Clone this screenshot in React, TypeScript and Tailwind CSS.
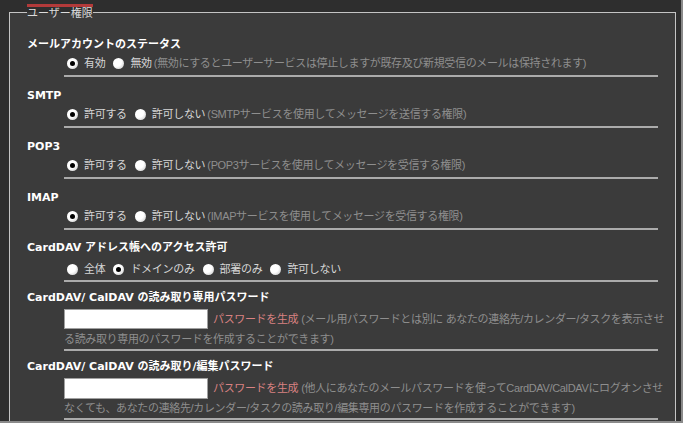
import React from "react";

const body = "font-['Liberation_Sans','Noto_Sans_CJK_JP',sans-serif]";
const head = "font-['DejaVu_Sans','Noto_Sans_CJK_JP',sans-serif]";

function Radio({ on }: { on?: boolean }) {
  return (
    <span className="inline-flex h-[11px] w-[11px] shrink-0 items-center justify-center rounded-full bg-[radial-gradient(circle_at_35%_35%,#ffffff_45%,#bdbdbd_100%)]">
      {on && <span className="h-[5px] w-[5px] rounded-full bg-black" />}
    </span>
  );
}

function Choices({ items, sel, note }: { items: string[]; sel: number; note?: string }) {
  return (
    <div className="flex h-[18px] items-center whitespace-nowrap pl-[3px]">
      {items.map((t, i) => (
        <span key={t} className={`flex items-center ${i > 0 ? "ml-[8px]" : ""}`}>
          <Radio on={i === sel} />
          <span className="ml-[6px] tracking-[-0.3px] text-[#d6d6d6]">{t}</span>
        </span>
      ))}
      {note && <span className="ml-[2px] tracking-[-0.35px] text-[#8e8e8e]">{note}</span>}
    </div>
  );
}

function Heading({ children, className = "" }: { children: React.ReactNode; className?: string }) {
  return <h3 className={`h-4 text-[11px] font-bold leading-4 text-white ${head} ${className}`}>{children}</h3>;
}

export default function App() {
  return (
    <div className={`h-[423px] w-[683px] overflow-hidden border-r-2 border-b-2 border-[#8a8a8a] bg-[#2e2e2e] pl-[9px] pr-[5px] pt-[4px] text-[11px] ${body}`}>
      <fieldset className="h-[440px] w-full min-w-0 border border-[#c4c4c4] bg-[#3b3b3b] px-[17px]">
        <legend className="border-t-[3px] border-[#b23a3a] leading-[13px] text-[#dcdcdc]">ユーザー権限</legend>

        {/* メール */}
        <Heading className="mt-[17px]">メールアカウントのステータス</Heading>
        <div className="mt-px ml-[37px] border-b-2 border-[#ababab] pb-[3px]">
          <Choices
            items={["有効", "無効"]}
            sel={0}
            note="(無効にするとユーザーサービスは停止しますが既存及び新規受信のメールは保持されます)"
          />
        </div>

        <Heading className="mt-[11px]">SMTP</Heading>
        <div className="mt-px ml-[37px] border-b-2 border-[#ababab] pb-[3px]">
          <Choices items={["許可する", "許可しない"]} sel={0} note="(SMTPサービスを使用してメッセージを送信する権限)" />
        </div>

        <Heading className="mt-[11px]">POP3</Heading>
        <div className="mt-px ml-[37px] border-b-2 border-[#ababab] pb-[3px]">
          <Choices items={["許可する", "許可しない"]} sel={0} note="(POP3サービスを使用してメッセージを受信する権限)" />
        </div>

        <Heading className="mt-[11px]">IMAP</Heading>
        <div className="mt-px ml-[37px] border-b-2 border-[#ababab] pb-[3px]">
          <Choices items={["許可する", "許可しない"]} sel={0} note="(IMAPサービスを使用してメッセージを受信する権限)" />
        </div>

        <Heading className="mt-[10px]">CardDAV アドレス帳へのアクセス許可</Heading>
        <div className="mt-[4px] ml-[37px] border-b-2 border-[#ababab] pb-[2px]">
          <Choices items={["全体", "ドメインのみ", "部署のみ", "許可しない"]} sel={1} />
        </div>

        {/* パスワード */}
        <Heading className="mt-[8px]">CardDAV/ CalDAV の読み取り専用パスワード</Heading>
        <div className="mt-[3px] ml-[37px] border-b-2 border-[#ababab] leading-[20px] tracking-[-0.35px] text-[#8e8e8e] whitespace-nowrap">
          <div className="flex items-center">
            <input className="h-[20px] w-[148px] border border-[#a0a0a0] bg-white" />
            <span className="ml-[5px] text-[#d98282]">パスワードを生成</span>
            <span className="ml-[3px]">(メール用パスワードとは別に あなたの連絡先/カレンダー/タスクを表示させ</span>
          </div>
          <div>る読み取り専用のパスワードを作成することができます)</div>
        </div>

        <Heading className="mt-[8px]">CardDAV/ CalDAV の読み取り/編集パスワード</Heading>
        <div className="mt-[3px] ml-[37px] border-b-2 border-[#ababab] leading-[19px] tracking-[-0.35px] text-[#8e8e8e] whitespace-nowrap">
          <div className="flex items-center">
            <input className="h-[21px] w-[148px] border border-[#a0a0a0] bg-white" />
            <span className="ml-[5px] text-[#d98282]">パスワードを生成</span>
            <span className="ml-[3px]">(他人にあなたのメールパスワードを使ってCardDAV/CalDAVにログオンさせ</span>
          </div>
          <div>なくても、あなたの連絡先/カレンダー/タスクの読み取り/編集専用のパスワードを作成することができます)</div>
        </div>
      </fieldset>
    </div>
  );
}
